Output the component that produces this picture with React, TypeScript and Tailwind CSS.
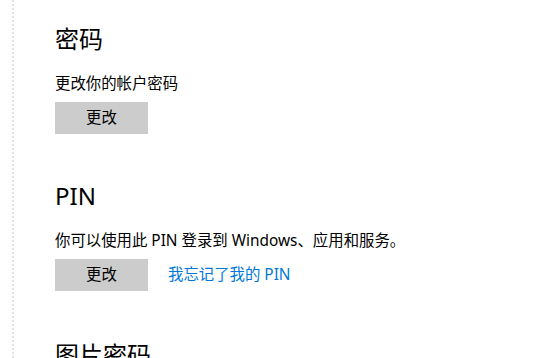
const font = {
  fontFamily: '"Noto Sans", "Noto Sans CJK SC", sans-serif',
};

function Section({
  title,
  desc,
  link,
  className = '',
}: {
  title: string;
  desc?: string;
  link?: string;
  className?: string;
}) {
  return (
    <section className={className}>
      <h2 className="text-[24px] leading-[32px] text-black">{title}</h2>
      {desc && (
        <>
          <p className="mt-[19px] text-[15.4px] leading-[20px] text-black">{desc}</p>
          <div className="mt-[8px] flex items-center gap-[20px]">
            <button className="h-[32px] w-[93px] bg-[#cccccc] text-[15.4px] text-black">
              更改
            </button>
            {link && (
              <a className="text-[15.4px] leading-[20px] text-[#0078d7] cursor-pointer">{link}</a>
            )}
          </div>
        </>
      )}
    </section>
  );
}

export default function App() {
  return (
    <div className="flex h-[358px] w-[553px] overflow-hidden bg-white" style={font}>
      {/* dotted pane divider */}
      <div className="ml-[12px] w-[2px] border-l-2 border-dotted border-[#e2e2e2]" />
      <div className="flex flex-col pl-[41px] pt-[23px]">
        <Section title="密码" desc="更改你的帐户密码" />
        <Section
          className="mt-[46px]"
          title="PIN"
          desc="你可以使用此 PIN 登录到 Windows、应用和服务。"
          link="我忘记了我的 PIN"
        />
        <Section className="mt-[48px]" title="图片密码" />
      </div>
    </div>
  );
}
